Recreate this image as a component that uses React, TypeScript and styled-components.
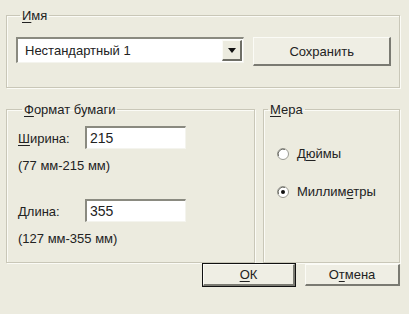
import { ReactElement } from "react";
import styled, { createGlobalStyle } from "styled-components";

const GlobalStyle = createGlobalStyle`
    html, body {
        margin: 0;
        padding: 0;
        background: #ecebdf;
    }
`;

const Dialog = styled.div`
    width: 409px;
    height: 314px;
    box-sizing: border-box;
    padding: 8px 9px 0 6px;
    background: #ecebdf;
    font-family: "Liberation Sans", Arial, sans-serif;
    font-size: 13px;
    color: #222;
    display: flex;
    flex-direction: column;
`;

const Group = styled.fieldset<{ $w?: number; $h: number; $pad: string }>`
    margin: 0;
    box-sizing: border-box;
    ${(p) => (p.$w ? `width: ${p.$w}px;` : "")}
    height: ${(p) => p.$h}px;
    padding: ${(p) => p.$pad};
    border: 1px solid #c9c7b8;
    box-shadow: inset 1px 1px 0 #fbfbf6, 1px 1px 0 #fbfbf6;
    min-width: 0;
`;

const Legend = styled.legend`
    margin-left: 4px;
    padding: 0 2px;
    line-height: 15px;
`;

const Key = styled.span`
    text-decoration: underline;
    text-underline-offset: 2px;
`;

const Row = styled.div<{ $gap?: number; $top?: number }>`
    display: flex;
    align-items: flex-start;
    gap: ${(p) => p.$gap ?? 0}px;
    margin-top: ${(p) => p.$top ?? 0}px;
`;

const Combo = styled.div`
    width: 229px;
    height: 26px;
    box-sizing: border-box;
    background: #fff;
    border-top: 2px solid #8a8a80;
    border-left: 2px solid #8a8a80;
    border-right: 1px solid #f4f4ee;
    border-bottom: 1px solid #f4f4ee;
    display: flex;
    align-items: center;
    padding-left: 7px;
`;

const ComboText = styled.span`
    flex: 1;
`;

const DropButton = styled.div`
    width: 20px;
    height: 21px;
    margin-right: 1px;
    box-sizing: border-box;
    background: #ecebdf;
    border-top: 1px solid #fbfbf6;
    border-left: 1px solid #fbfbf6;
    border-right: 2px solid #6e6e66;
    border-bottom: 2px solid #6e6e66;
    display: flex;
    align-items: center;
    justify-content: center;
`;

const Button = styled.button<{ $w: number; $h: number; $default?: boolean }>`
    width: ${(p) => p.$w}px;
    height: ${(p) => p.$h}px;
    box-sizing: border-box;
    padding: 0;
    font: inherit;
    color: #222;
    background: #efeee4;
    border-top: 1px solid #fbfbf6;
    border-left: 1px solid #fbfbf6;
    border-right: 2px solid #7a7a72;
    border-bottom: 2px solid #7a7a72;
    outline: ${(p) => (p.$default ? "1px solid #111" : "none")};
    outline-offset: 0;
`;

const Field = styled.div`
    width: 101px;
    height: 23px;
    box-sizing: border-box;
    background: #fff;
    border-top: 2px solid #8a8a80;
    border-left: 2px solid #8a8a80;
    border-right: 1px solid #f4f4ee;
    border-bottom: 1px solid #f4f4ee;
    padding: 2px 0 0 3px;
    font-size: 14px;
`;

const FieldLabel = styled.span`
    width: 67px;
    line-height: 25px;
`;

const Hint = styled.div`
    margin-top: 7px;
    line-height: 15px;
`;

const RadioList = styled.div`
    display: flex;
    flex-direction: column;
    gap: 23px;
    padding: 29px 0 0 13px;
`;

const RadioRow = styled.label`
    display: flex;
    align-items: center;
    gap: 8px;
    line-height: 15px;
`;

const Footer = styled.div`
    display: flex;
    justify-content: flex-end;
    gap: 10px;
    margin-top: 1px;
`;

const Radio = ({ on }: { on?: boolean }): ReactElement => (
  <svg width="12" height="12" viewBox="0 0 12 12">
    <circle cx="6" cy="6" r="5.5" fill="#fff" stroke="#9a9a92" />
    <path d="M1.5 8 A5 5 0 0 1 8 1.5" fill="none" stroke="#6e6e66" strokeWidth="1" />
    {on && <circle cx="6" cy="6" r="2" fill="#111" />}
  </svg>
);

export default function App(): ReactElement {
  return (
    <Dialog>
      <GlobalStyle />
      <Group $h={80} $pad="14px 8px 0 9px">
        <Legend>
          <Key>И</Key>мя
        </Legend>
        <Row $gap={9}>
          <Combo>
            <ComboText>Нестандартный 1</ComboText>
            <DropButton>
              <svg width="8" height="5" viewBox="0 0 8 5">
                <path d="M0 0 H8 L4 5 Z" fill="#111" />
              </svg>
            </DropButton>
          </Combo>
          <Button $w={138} $h={29}>Сохранить</Button>
        </Row>
      </Group>
      <Row $gap={8} $top={14}>
        <Group $w={249} $h={161} $pad="9px 8px 0 11px">
          <Legend>
            <Key>Ф</Key>ормат бумаги
          </Legend>
          <Row>
            <FieldLabel>
              <Key>Ш</Key>ирина:
            </FieldLabel>
            <Field>215</Field>
          </Row>
          <Hint>(77 мм-215 мм)</Hint>
          <Row $top={26}>
            <FieldLabel>
              <Key>Д</Key>лина:
            </FieldLabel>
            <Field>355</Field>
          </Row>
          <Hint>(127 мм-355 мм)</Hint>
        </Group>
        <Group $w={137} $h={161} $pad="0 8px 0 0">
          <Legend>
            <Key>М</Key>ера
          </Legend>
          <RadioList>
            <RadioRow>
              <Radio />
              <span>
                Д<Key>ю</Key>ймы
              </span>
            </RadioRow>
            <RadioRow>
              <Radio on />
              <span>
                Миллим<Key>е</Key>тры
              </span>
            </RadioRow>
          </RadioList>
        </Group>
      </Row>
      <Footer>
        <Button $w={92} $h={22} $default>
          <Key>О</Key>К
        </Button>
        <Button $w={95} $h={22}>
          О<Key>т</Key>мена
        </Button>
      </Footer>
    </Dialog>
  );
}
